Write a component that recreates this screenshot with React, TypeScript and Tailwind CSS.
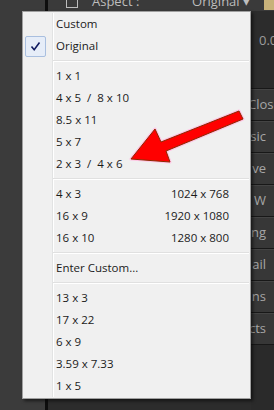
import { Fragment } from 'react';

type Item = { label: string; right?: string; checked?: boolean } | 'sep';

const items: Item[] = [
  { label: 'Custom' },
  { label: 'Original', checked: true },
  'sep',
  { label: '1 x 1' },
  { label: '4 x 5  /  8 x 10' },
  { label: '8.5 x 11' },
  { label: '5 x 7' },
  { label: '2 x 3  /  4 x 6' },
  'sep',
  { label: '4 x 3', right: '1024 x 768' },
  { label: '16 x 9', right: '1920 x 1080' },
  { label: '16 x 10', right: '1280 x 800' },
  'sep',
  { label: 'Enter Custom...' },
  'sep',
  { label: '13 x 3' },
  { label: '17 x 22' },
  { label: '6 x 9' },
  { label: '3.59 x 7.33' },
  { label: '1 x 5' },
];

// only the tail ends of these panel headers show past the menu
const panels = ['Close', 'sic', 've', 'W', 'ng', 'ail', 'ns', 'cts'];

function Gutter({ children }: { children?: React.ReactNode }) {
  return (
    <div className="flex w-[30px] shrink-0 items-center self-stretch border-r border-r-[#e2e3e3] pl-[2px] shadow-[1px_0_0_#ffffff]">
      {children}
    </div>
  );
}

function Arrow() {
  const pts = '131,159 155,129 161,142 239,111 243,119 166,151 170,162';
  return (
    <svg className="pointer-events-none absolute left-0 top-0" width="274" height="410" viewBox="0 0 274 410">
      <polygon points={pts} fill="#ff0000" stroke="#ffc4e4" strokeWidth="3" strokeLinejoin="round" />
      <polygon points={pts} fill="#ff0000" stroke="#8a2a00" strokeWidth="1" />
    </svg>
  );
}

export default function App() {
  return (
    <div className="relative flex h-[410px] w-[274px] overflow-hidden bg-[#2b2b2b] font-['Open_Sans',sans-serif]">
      <div className="w-[45px] bg-[#3b3b3b]" />
      <div className="w-[3px] bg-[#0e0e0e]" />
      <div className="flex flex-1 flex-col bg-[#2c2c2c]">
        <div className="h-[11px] overflow-hidden bg-[#3a3a3a]">
          <div className="-mt-[8px] flex h-[19px] items-center text-[13px] text-[#bdbdbd]">
            <div className="ml-[18px] h-[12px] w-[12px] border border-[#bdbdbd]" />
            <span className="ml-[14px]">Aspect :</span>
            <span className="ml-auto">Original ▾</span>
            <div className="ml-[14px] h-[17px] w-[10px] bg-[#c8b27a]" />
          </div>
        </div>
        <div className="flex flex-1">
          <div className="flex-1" />
          <div className="flex w-[23px] flex-col overflow-hidden">
            <div className="h-[77px] pl-[8px] pt-[20px] text-[13px] text-[#9c9c9c]">
              <span className="whitespace-nowrap">0.0</span>
            </div>
            {panels.map((p, i) => (
              <div
                key={p}
                className={`flex h-[32px] items-center border-t border-t-[#181818] bg-[#373737] text-[13px] text-[#a6a6a6] shadow-[inset_0_1px_0_#444444] ${
                  i === 0 ? 'justify-start' : 'justify-end pr-[8px]'
                }`}
              >
                <span className={`whitespace-nowrap ${i === 0 ? '-ml-[3px]' : ''}`}>{p}</span>
              </div>
            ))}
            <div className="flex-1 border-t border-t-[#181818] bg-[#2a2a2a]" />
          </div>
        </div>
      </div>

      <div className="absolute left-[22px] top-[11px] w-[229px] border border-[#a0a0a0] bg-[#f0f0f0] py-[1px] text-[11.5px] text-[#1b1b1b] shadow-[2px_2px_3px_rgba(0,0,0,0.55)]">
        {items.map((it, i) =>
          it === 'sep' ? (
            <div key={i} className="flex h-[8px]">
              <Gutter />
              <div className="mr-[1px] mt-[3px] h-[2px] flex-1 border-t border-t-[#e0e0e0] border-b border-b-[#ffffff]" />
            </div>
          ) : (
            <Fragment key={i}>
              <div className="flex h-[22px] items-center">
                <Gutter>
                  {it.checked && (
                    <div className="flex h-[21px] w-[21px] items-center justify-center rounded-[2px] border border-[#a9bfdf] bg-[#e6edf8]">
                      <svg width="11" height="11" viewBox="0 0 11 11">
                        <path d="M1.5 5.5 L4.2 8.8 L9.5 1.5" fill="none" stroke="#101a60" strokeWidth="1.6" />
                      </svg>
                    </div>
                  )}
                </Gutter>
                <div className="flex flex-1 items-center pl-[3px] pr-[21px]">
                  <span className="whitespace-pre">{it.label}</span>
                  {it.right && <span className="ml-auto whitespace-pre">{it.right}</span>}
                </div>
              </div>
            </Fragment>
          ),
        )}
      </div>
      <Arrow />
    </div>
  );
}
